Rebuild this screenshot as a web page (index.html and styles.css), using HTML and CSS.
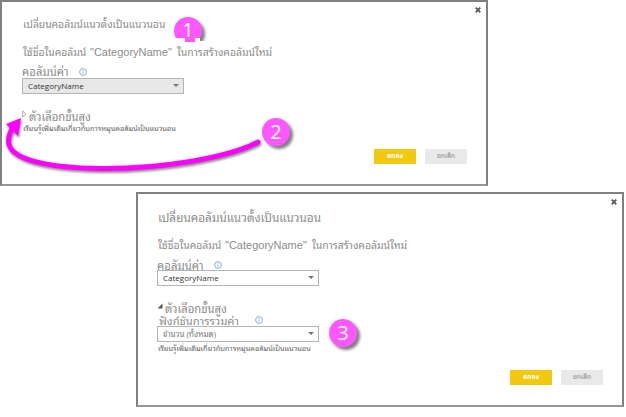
FILE: index.html
```html
<!DOCTYPE html>
<html lang="th">
<head>
<meta charset="utf-8">
<title>เปลี่ยนคอลัมน์แนวตั้งเป็นแนวนอน</title>
<link rel="stylesheet" href="styles.css">
</head>
<body>
<main class="stage">
  <section class="dialog dialog-first">
    <svg class="close" viewBox="0 0 6 6"><path d="M.7.7l4.6 4.6M5.3.7L.7 5.3"/></svg>
    <h2 class="title">เปลี่ยนคอลัมน์แนวตั้งเป็นแนวนอน</h2>
    <p class="desc"><span class="desc-a">ใช้ชื่อในคอลัมน์</span><span class="desc-b">"CategoryName"</span><span class="desc-c">ในการสร้างคอลัมน์ใหม่</span></p>
    <div class="label"><span class="label-value">คอลัมน์ค่า</span><svg class="info" viewBox="0 0 8 8"><circle cx="4" cy="4" r="3.4"/><path d="M4 3.5v2.3M4 2v.8"/></svg></div>
    <div class="select filled"><span>CategoryName</span><i class="caret"></i></div>
    <div class="advanced"><svg class="toggle" viewBox="0 0 5 8"><path d="M.7 1v6l3.2-3z" fill="#fff" stroke="#999" stroke-width=".8"/></svg><span class="advanced-text">ตัวเลือกขั้นสูง</span></div>
    <a class="learn"><span>เรียนรู้เพิ่มเติมเกี่ยวกับการหมุนคอลัมน์เป็นแนวนอน</span></a>
    <div class="actions"><button class="ok">ตกลง</button><button class="cancel">ยกเลิก</button></div>
  </section>
  <section class="dialog dialog-second">
    <svg class="close" viewBox="0 0 6 6"><path d="M.7.7l4.6 4.6M5.3.7L.7 5.3"/></svg>
    <h2 class="title">เปลี่ยนคอลัมน์แนวตั้งเป็นแนวนอน</h2>
    <p class="desc"><span class="desc-a">ใช้ชื่อในคอลัมน์</span><span class="desc-b">"CategoryName"</span><span class="desc-c">ในการสร้างคอลัมน์ใหม่</span></p>
    <div class="label"><span class="label-value">คอลัมน์ค่า</span><svg class="info" viewBox="0 0 8 8"><circle cx="4" cy="4" r="3.4"/><path d="M4 3.5v2.3M4 2v.8"/></svg></div>
    <div class="select"><span>CategoryName</span><i class="caret"></i></div>
    <div class="advanced"><svg class="toggle" viewBox="0 0 5 8"><path d="M5 1.5v5H0z" fill="#555"/></svg><span class="advanced-text">ตัวเลือกขั้นสูง</span></div>
    <div class="label label-agg"><span class="label-func">ฟังก์ชันการรวมค่า</span><svg class="info" viewBox="0 0 8 8"><circle cx="4" cy="4" r="3.4"/><path d="M4 3.5v2.3M4 2v.8"/></svg></div>
    <div class="select select-agg"><span>จำนวน (ทั้งหมด)</span><i class="caret"></i></div>
    <a class="learn"><span>เรียนรู้เพิ่มเติมเกี่ยวกับการหมุนคอลัมน์เป็นแนวนอน</span></a>
    <div class="actions"><button class="ok">ตกลง</button><button class="cancel">ยกเลิก</button></div>
  </section>
  <svg class="arrow" viewBox="0 0 270 80">
    <path d="M258 32C228 48 160 59 100 58.5C50 58 8 50 8.500 31C8.500 24 11 20 14 17" fill="none" stroke="#f0f" stroke-width="5" stroke-linecap="round"/>
    <path d="M21 8L6 14L18 26z" fill="#f0f"/>
  </svg>
  <b class="badge badge-one">1</b>
  <b class="badge badge-two">2</b>
  <b class="badge badge-three">3</b>
</main>
</body>
</html>
```

FILE: styles.css
```css
* { box-sizing: border-box; }
body { margin: 0; background: #fff; font-family: "Open Sans", "Noto Sans Thai Looped", Loma, Garuda, Waree, Umpush, "Noto Sans Thai", "Liberation Sans", sans-serif; }
.stage { position: relative; width: 626px; height: 417px; overflow: hidden; }
.dialog { position: relative; display: flex; flex-direction: column; width: 488px; padding-left: 20px; border: 2px solid #808080; border-bottom-color: #969696; background: #fff; color: #8c8c8c; white-space: nowrap; }
.dialog-first { height: 186px; }
.dialog-second { height: 215px; margin: 6px 0 0 136px; padding-left: 19px; }
.close { position: absolute; top: 5px; right: 5px; width: 6px; height: 6px; fill: none; stroke: #555; stroke-width: 1.7; }
.title, .desc { margin: 0; font-weight: 400; line-height: 20px; height: 20px; }
.title { margin-top: 12px; padding-left: 1px; font-size: 10.3px; }
.dialog-second .title { margin-top: 13px; font-size: 11.8px; }
.desc { display: flex; margin-top: 8px; padding-left: 1px; font-size: 10.4px; }
.desc-a { width: 67px; }
.desc-b { width: 87px; font: 11px/20px "Liberation Sans", sans-serif; }
.label { display: flex; align-items: flex-start; height: 12px; margin-top: 3px; line-height: 15px; font-size: 11.4px; }
.dialog-first .label { margin-top: 4px; height: 12px; line-height: 12px; }
.label-value { width: 57px; }
.label-func { width: 98px; padding-left: 2px; }
.info { width: 8px; height: 8px; margin-top: 3px; fill: none; stroke: #77a5d8; stroke-width: .9; }
.dialog-first .info { margin-top: 2px; }
.select { display: flex; flex: none; align-items: center; justify-content: space-between; width: 162px; height: 16px; padding: 0 4px 1px 5px; border: 1px solid #b4b4b4; background: #fff; color: #333; font-size: 8px; line-height: 12px; }
.filled { background: #e8e8e8; }
.select-agg { color: #777; }
.caret { border: 3px solid transparent; border-top: 3px solid #777; border-bottom: 0; }
.advanced { display: flex; height: 15px; margin-top: 15px; line-height: 16px; font-size: 11.3px; }
.toggle { width: 5px; height: 8px; margin: 1px 2px 0 0; }
.dialog-second .toggle { width: 6px; }
.label-agg { height: 10px; margin-top: 0; line-height: 10px; font-size: 11.2px; }
.label-agg .info { margin-top: 0; }
.select-agg { margin-top: 0; }
.learn { height: 10px; padding-left: 1px; font-size: 7.4px; line-height: 8px; color: #666; }
.dialog-second .learn { margin-top: 2px; }
.actions { position: absolute; right: 19px; bottom: 20px; display: flex; gap: 9px; }
.actions button { width: 42px; height: 15px; padding: 0 0 1px; border: 0; font-family: inherit; font-size: 6.5px; line-height: 14px; }
.actions .ok { background: #f2c811; color: #fff; font-weight: 700; }
.actions .cancel { background: #e9e9e9; color: #888; }
.arrow { position: absolute; left: 0; top: 110px; width: 270px; height: 80px; filter: drop-shadow(1px 2px 1px rgba(0,0,0,.45)); }
.badge { position: absolute; width: 28px; height: 28px; border-radius: 50%; background: #ff57ff; color: #fff; box-shadow: 3px 3px 3px rgba(0,0,0,.5); text-align: center; font: 20px/28px "Open Sans", sans-serif; }
.badge-one { left: 174px; top: 17px; line-height: 26px; clip-path: polygon(-2px -2px, 36px -2px, 36px 24px, 26px 24px, 26px 21px, 21px 21px, 21px 25px, 11px 25px, 11px 21px, -2px 21px); }
.badge-two { left: 262px; top: 118px; }
.badge-three { left: 329px; top: 319px; }
```
